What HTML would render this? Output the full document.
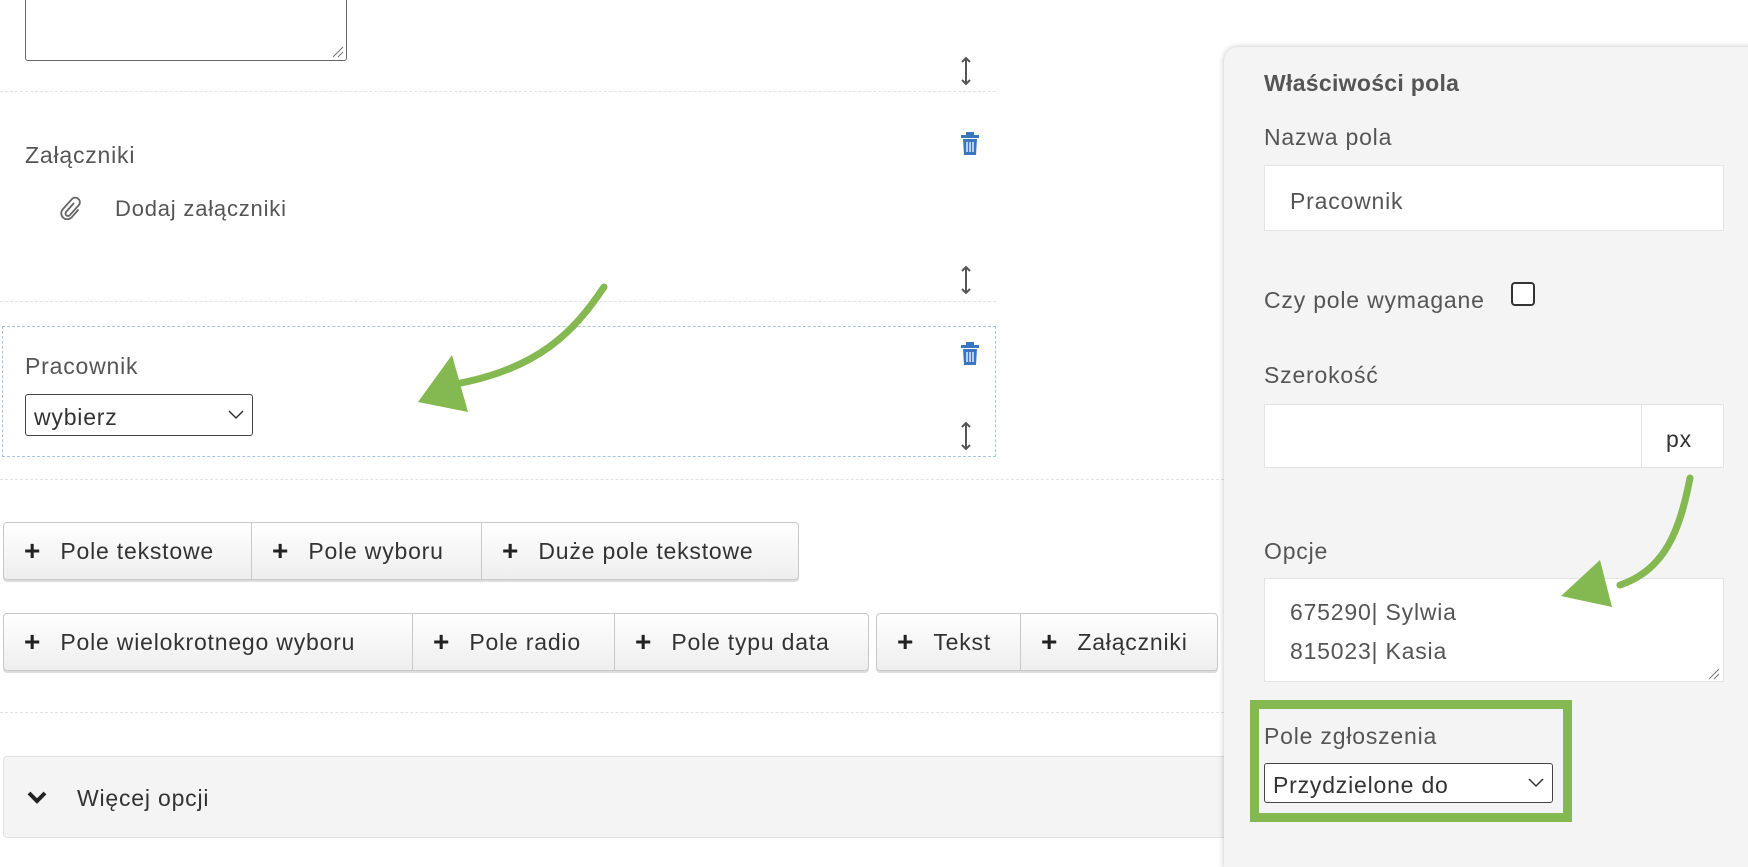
<!DOCTYPE html>
<html><head><meta charset="utf-8"><style>
*{box-sizing:border-box;margin:0;padding:0}
body{width:1748px;height:842px;background:#fff;font-family:"Liberation Sans",sans-serif;color:#555;position:relative;overflow:hidden;font-size:23px;letter-spacing:0.8px}
.a{position:absolute}
.dash{position:absolute;left:0;width:996px;border-top:1px dashed #e3e3e3}
.t{position:absolute;line-height:1}
.grp{position:absolute;display:flex;border:1px solid #c8c8c8;border-radius:4px;background:linear-gradient(#fff,#eee);box-shadow:0 2px 0 #ddd}
.grp div{display:flex;align-items:center;padding:0 20px;border-right:1px solid #c8c8c8;color:#333;font-size:23px;white-space:nowrap;overflow:hidden}
.grp div:last-child{border-right:none}
.grp b{font-size:28px;margin-right:20px;font-weight:900;color:#222;letter-spacing:0}
.inp{position:absolute;background:#fff;border:1px solid #e4e4e4}
</style></head><body>
<div class="a" style="left:25px;top:-5px;width:322px;height:66px;border:1px solid #666;border-radius:3px"></div>
<svg class="a" style="left:330px;top:44px" width="14" height="14"><path d="M3 13L13 3M8 13L13 8" stroke="#777" stroke-width="1"/></svg>
<svg class="a" style="left:958px;top:56px" width="16" height="30"><path d="M8 2v26M4 6l4-4 4 4M4 24l4 4 4-4" stroke="#555" stroke-width="2" fill="none"/></svg>
<div class="dash" style="top:91px"></div>
<div class="t" style="left:25px;top:144px">Załączniki</div>
<svg class="a" style="left:960px;top:132px" width="20" height="24"><rect x="1" y="3" width="18" height="3" fill="#3a76c0"/><rect x="6" y="0" width="8" height="3" fill="#3a76c0"/><path d="M3 7h14l-1 16H4z" fill="#3a76c0"/><path d="M7 10v10M10 10v10M13 10v10" stroke="#fff" stroke-width="1.3"/></svg>
<svg class="a" style="left:59px;top:196px" width="22" height="24"><path d="M15 7l-8 9a2.5 2.5 0 0 0 3.5 3.5l9-10a4.5 4.5 0 0 0-6.5-6.5l-9 10a6 6 0 0 0 8.5 8.5l7-8" stroke="#666" stroke-width="1.8" fill="none"/></svg>
<div class="t" style="left:115px;top:198px;font-size:22px">Dodaj załączniki</div>
<svg class="a" style="left:958px;top:265px" width="16" height="30"><path d="M8 2v26M4 6l4-4 4 4M4 24l4 4 4-4" stroke="#555" stroke-width="2" fill="none"/></svg>
<div class="dash" style="top:301px"></div>
<div class="a" style="left:2px;top:326px;width:994px;height:131px;border:1.5px dashed #a8c4e0"></div>
<div class="t" style="left:25px;top:355px">Pracownik</div>
<div class="a" style="left:25px;top:394px;width:228px;height:42px;border:1.5px solid #444;border-radius:3px;padding:9px 8px;font-size:23px;color:#333">wybierz<svg style="position:absolute;right:8px;top:15px" width="16" height="10"><path d="M1 1l7 7 7-7" stroke="#333" fill="none" stroke-width="1.5"/></svg></div>
<svg class="a" style="left:960px;top:342px" width="20" height="24"><rect x="1" y="3" width="18" height="3" fill="#3a76c0"/><rect x="6" y="0" width="8" height="3" fill="#3a76c0"/><path d="M3 7h14l-1 16H4z" fill="#3a76c0"/><path d="M7 10v10M10 10v10M13 10v10" stroke="#fff" stroke-width="1.3"/></svg>
<svg class="a" style="left:958px;top:421px" width="16" height="30"><path d="M8 2v26M4 6l4-4 4 4M4 24l4 4 4-4" stroke="#555" stroke-width="2" fill="none"/></svg>
<div class="dash" style="top:479px;width:1224px"></div>
<div class="grp" style="left:3px;top:522px;height:58px"><div style="width:248px"><b>+</b>Pole tekstowe</div><div style="width:230px"><b>+</b>Pole wyboru</div><div style="width:316px"><b>+</b>Duże pole tekstowe</div></div>
<div class="grp" style="left:3px;top:613px;height:58px"><div style="width:409px"><b>+</b>Pole wielokrotnego wyboru</div><div style="width:202px"><b>+</b>Pole radio</div><div style="width:253px"><b>+</b>Pole typu data</div></div>
<div class="grp" style="left:876px;top:613px;height:58px"><div style="width:144px"><b>+</b>Tekst</div><div style="width:196px"><b>+</b>Załączniki</div></div>
<div class="dash" style="top:712px;width:1224px"></div>
<div class="a" style="left:3px;top:756px;width:1240px;height:82px;background:#f4f4f4;border:1px solid #e0e0e0;border-radius:4px"></div>
<svg class="a" style="left:26px;top:790px" width="22" height="16"><path d="M3 3l8 8 8-8" stroke="#222" stroke-width="4" fill="none"/></svg>
<div class="t" style="left:77px;top:787px;color:#333">Więcej opcji</div>

<div class="a" style="left:1224px;top:47px;width:540px;height:820px;background:#f4f4f4;border-radius:14px 0 0 0;box-shadow:0 0 6px rgba(0,0,0,.25)"></div>
<div class="t" style="left:1264px;top:72px;font-weight:bold;font-size:23px;letter-spacing:0.3px">Właściwości pola</div>
<div class="t" style="left:1264px;top:126px">Nazwa pola</div>
<div class="inp" style="left:1264px;top:165px;width:460px;height:66px;padding:22px 25px">Pracownik</div>
<div class="t" style="left:1264px;top:289px">Czy pole wymagane</div>
<div class="a" style="left:1511px;top:282px;width:24px;height:24px;border:2px solid #333;border-radius:4px;background:#fff"></div>
<div class="t" style="left:1264px;top:364px">Szerokość</div>
<div class="inp" style="left:1264px;top:404px;width:460px;height:64px"></div>
<div class="a" style="left:1641px;top:404px;width:83px;height:64px;border:1px solid #e4e4e4;background:#fff;padding:21px 24px;color:#333">px</div>
<div class="t" style="left:1264px;top:540px">Opcje</div>
<div class="inp" style="left:1264px;top:578px;width:460px;height:104px;padding:14px 25px;line-height:39px">675290| Sylwia<br>815023| Kasia</div>
<svg class="a" style="left:1706px;top:666px" width="14" height="14"><path d="M3 13L13 3M8 13L13 8" stroke="#777" stroke-width="1"/></svg>
<div class="a" style="left:1250px;top:700px;width:322px;height:122px;border:9px solid #84b851"></div>
<div class="t" style="left:1264px;top:725px">Pole zgłoszenia</div>
<div class="a" style="left:1264px;top:763px;width:289px;height:40px;border:1.5px solid #444;border-radius:3px;background:#fff;padding:8px 8px;color:#333">Przydzielone do<svg style="position:absolute;right:8px;top:14px" width="16" height="10"><path d="M1 1l7 7 7-7" stroke="#333" fill="none" stroke-width="1.5"/></svg></div>

<svg class="a" style="left:0;top:0" width="1748" height="842">
<path d="M604 287 C575 330 540 370 450 385" stroke="#84b851" stroke-width="7" fill="none" stroke-linecap="round"/>
<path d="M418 402 L452 355 L468 412 Z" fill="#84b851"/>
<path d="M1690 478 C1680 530 1665 570 1620 585" stroke="#84b851" stroke-width="7" fill="none" stroke-linecap="round"/>
<path d="M1561 596 L1600 560 L1612 607 Z" fill="#84b851"/>
</svg>
</body></html>
